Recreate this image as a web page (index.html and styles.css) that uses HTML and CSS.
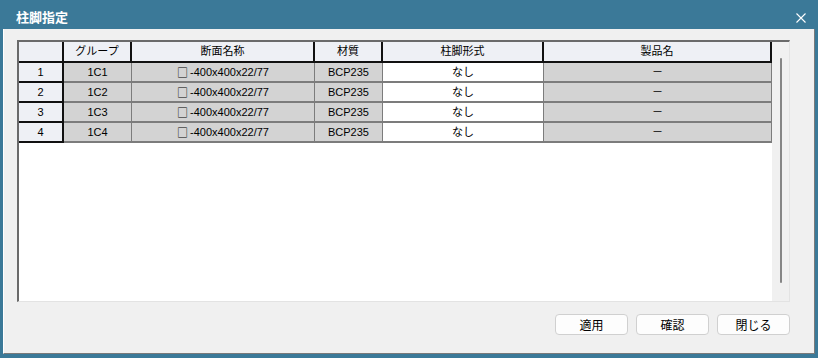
FILE: index.html
```html
<!DOCTYPE html>
<html lang="ja">
<head>
<meta charset="utf-8">
<title>柱脚指定</title>
<link rel="stylesheet" href="styles.css">
</head>
<body>
<div class="window">
  <div class="titlebar">
    <span class="title">柱脚指定</span>
    <svg class="close" width="10" height="10" viewBox="0 0 10 10"><path d="M0.5 0.5 L9.5 9.5 M9.5 0.5 L0.5 9.5" stroke="#ffffff" stroke-width="1.1" fill="none"/></svg>
  </div>
  <div class="body">
    <div class="grid">
      <div class="table-area">
        <div class="row head">
          <div class="cell hdr"></div>
          <div class="cell hdr">グループ</div>
          <div class="cell hdr">断面名称</div>
          <div class="cell hdr">材質</div>
          <div class="cell hdr">柱脚形式</div>
          <div class="cell hdr">製品名</div>
        </div>
        <div class="row">
          <div class="cell rh">1</div>
          <div class="cell ro">1C1</div>
          <div class="cell ro"><span class="sq">□</span>-400x400x22/77</div>
          <div class="cell ro">BCP235</div>
          <div class="cell ed">なし</div>
          <div class="cell ro">－</div>
        </div>
        <div class="row">
          <div class="cell rh">2</div>
          <div class="cell ro">1C2</div>
          <div class="cell ro"><span class="sq">□</span>-400x400x22/77</div>
          <div class="cell ro">BCP235</div>
          <div class="cell ed">なし</div>
          <div class="cell ro">－</div>
        </div>
        <div class="row">
          <div class="cell rh">3</div>
          <div class="cell ro">1C3</div>
          <div class="cell ro"><span class="sq">□</span>-400x400x22/77</div>
          <div class="cell ro">BCP235</div>
          <div class="cell ed">なし</div>
          <div class="cell ro">－</div>
        </div>
        <div class="row">
          <div class="cell rh">4</div>
          <div class="cell ro">1C4</div>
          <div class="cell ro"><span class="sq">□</span>-400x400x22/77</div>
          <div class="cell ro">BCP235</div>
          <div class="cell ed">なし</div>
          <div class="cell ro">－</div>
        </div>
      </div>
      <div class="vscroll"><div class="thumb"></div></div>
    </div>
    <div class="buttons">
      <button class="btn">適用</button>
      <button class="btn">確認</button>
      <button class="btn">閉じる</button>
    </div>
  </div>
</div>
</body>
</html>
```
FILE: styles.css
```css
html, body {
  margin: 0;
  padding: 0;
}
body {
  width: 818px;
  height: 358px;
  overflow: hidden;
  background: #3b7998;
  font-family: "Liberation Sans", "Noto Sans CJK JP", sans-serif;
  color: #000;
}
.window {
  display: flex;
  flex-direction: column;
  height: 358px;
  box-sizing: border-box;
  padding: 0 3px 4px 3px;
}
.titlebar {
  height: 29px;
  flex: none;
  display: flex;
  align-items: center;
  justify-content: space-between;
  padding: 0 9px 0 13px;
}
.title {
  color: #fff;
  font-family: "Noto Sans CJK JP", sans-serif;
  font-weight: bold;
  font-size: 13px;
  line-height: 13px;
  margin-top: 4px;
}
.close {
  display: block;
  margin-top: 6px;
}
.body {
  flex: 1;
  background: #f0f0f0;
  border-left: 1px solid #ffffff;
  border-right: 1px solid #7a7a7a;
  border-bottom: 1px solid #7a7a7a;
  padding: 11px 24px 0 13px;
  display: flex;
  flex-direction: column;
}
.grid {
  height: 262px;
  box-sizing: border-box;
  border-top: 2px solid #6a6a6a;
  border-left: 2px solid #6a6a6a;
  border-right: 1px solid #e3e3e3;
  border-bottom: 1px solid #e3e3e3;
  display: flex;
}
.table-area {
  flex: 1;
  background: #fff;
}
.row {
  display: grid;
  grid-template-columns: 45px 68px 183px 68px 161px 228px;
  height: 20px;
}
.row.head {
  height: 21px;
}
.cell {
  box-sizing: border-box;
  display: flex;
  align-items: center;
  justify-content: center;
  font-size: 11px;
  line-height: 11px;
  white-space: nowrap;
  border-right: 1px solid #7c7c7c;
  border-bottom: 2px solid #7c7c7c;
}
.sq {
  font-family: "Noto Sans CJK JP", sans-serif;
  font-size: 11px;
  margin-right: 2px;
}
.cell.hdr {
  background: #eef0f5;
  border-right: 2px solid #111;
  border-bottom: 2px solid #111;
}
.cell.rh {
  background: #eef0f5;
  border-right: 2px solid #111;
  border-bottom: 2px solid #111;
}
.cell.ro {
  background: #d3d3d3;
}
.cell.ed {
  background: #ffffff;
}
.vscroll {
  width: 17px;
  flex: none;
  background: #f0f0f0;
}
.thumb {
  width: 2px;
  height: 225px;
  margin: 16px 0 0 8px;
  background: #858585;
  border-radius: 1px;
}
.buttons {
  display: flex;
  justify-content: flex-end;
  gap: 8px;
  margin-top: 12px;
}
.btn {
  width: 73px;
  height: 21px;
  box-sizing: border-box;
  border: 1px solid #d0d0d0;
  border-radius: 4px;
  background: #fdfdfd;
  font-family: "Noto Sans CJK JP", sans-serif;
  font-size: 12px;
  line-height: 12px;
  color: #000;
  padding: 0;
}
```
